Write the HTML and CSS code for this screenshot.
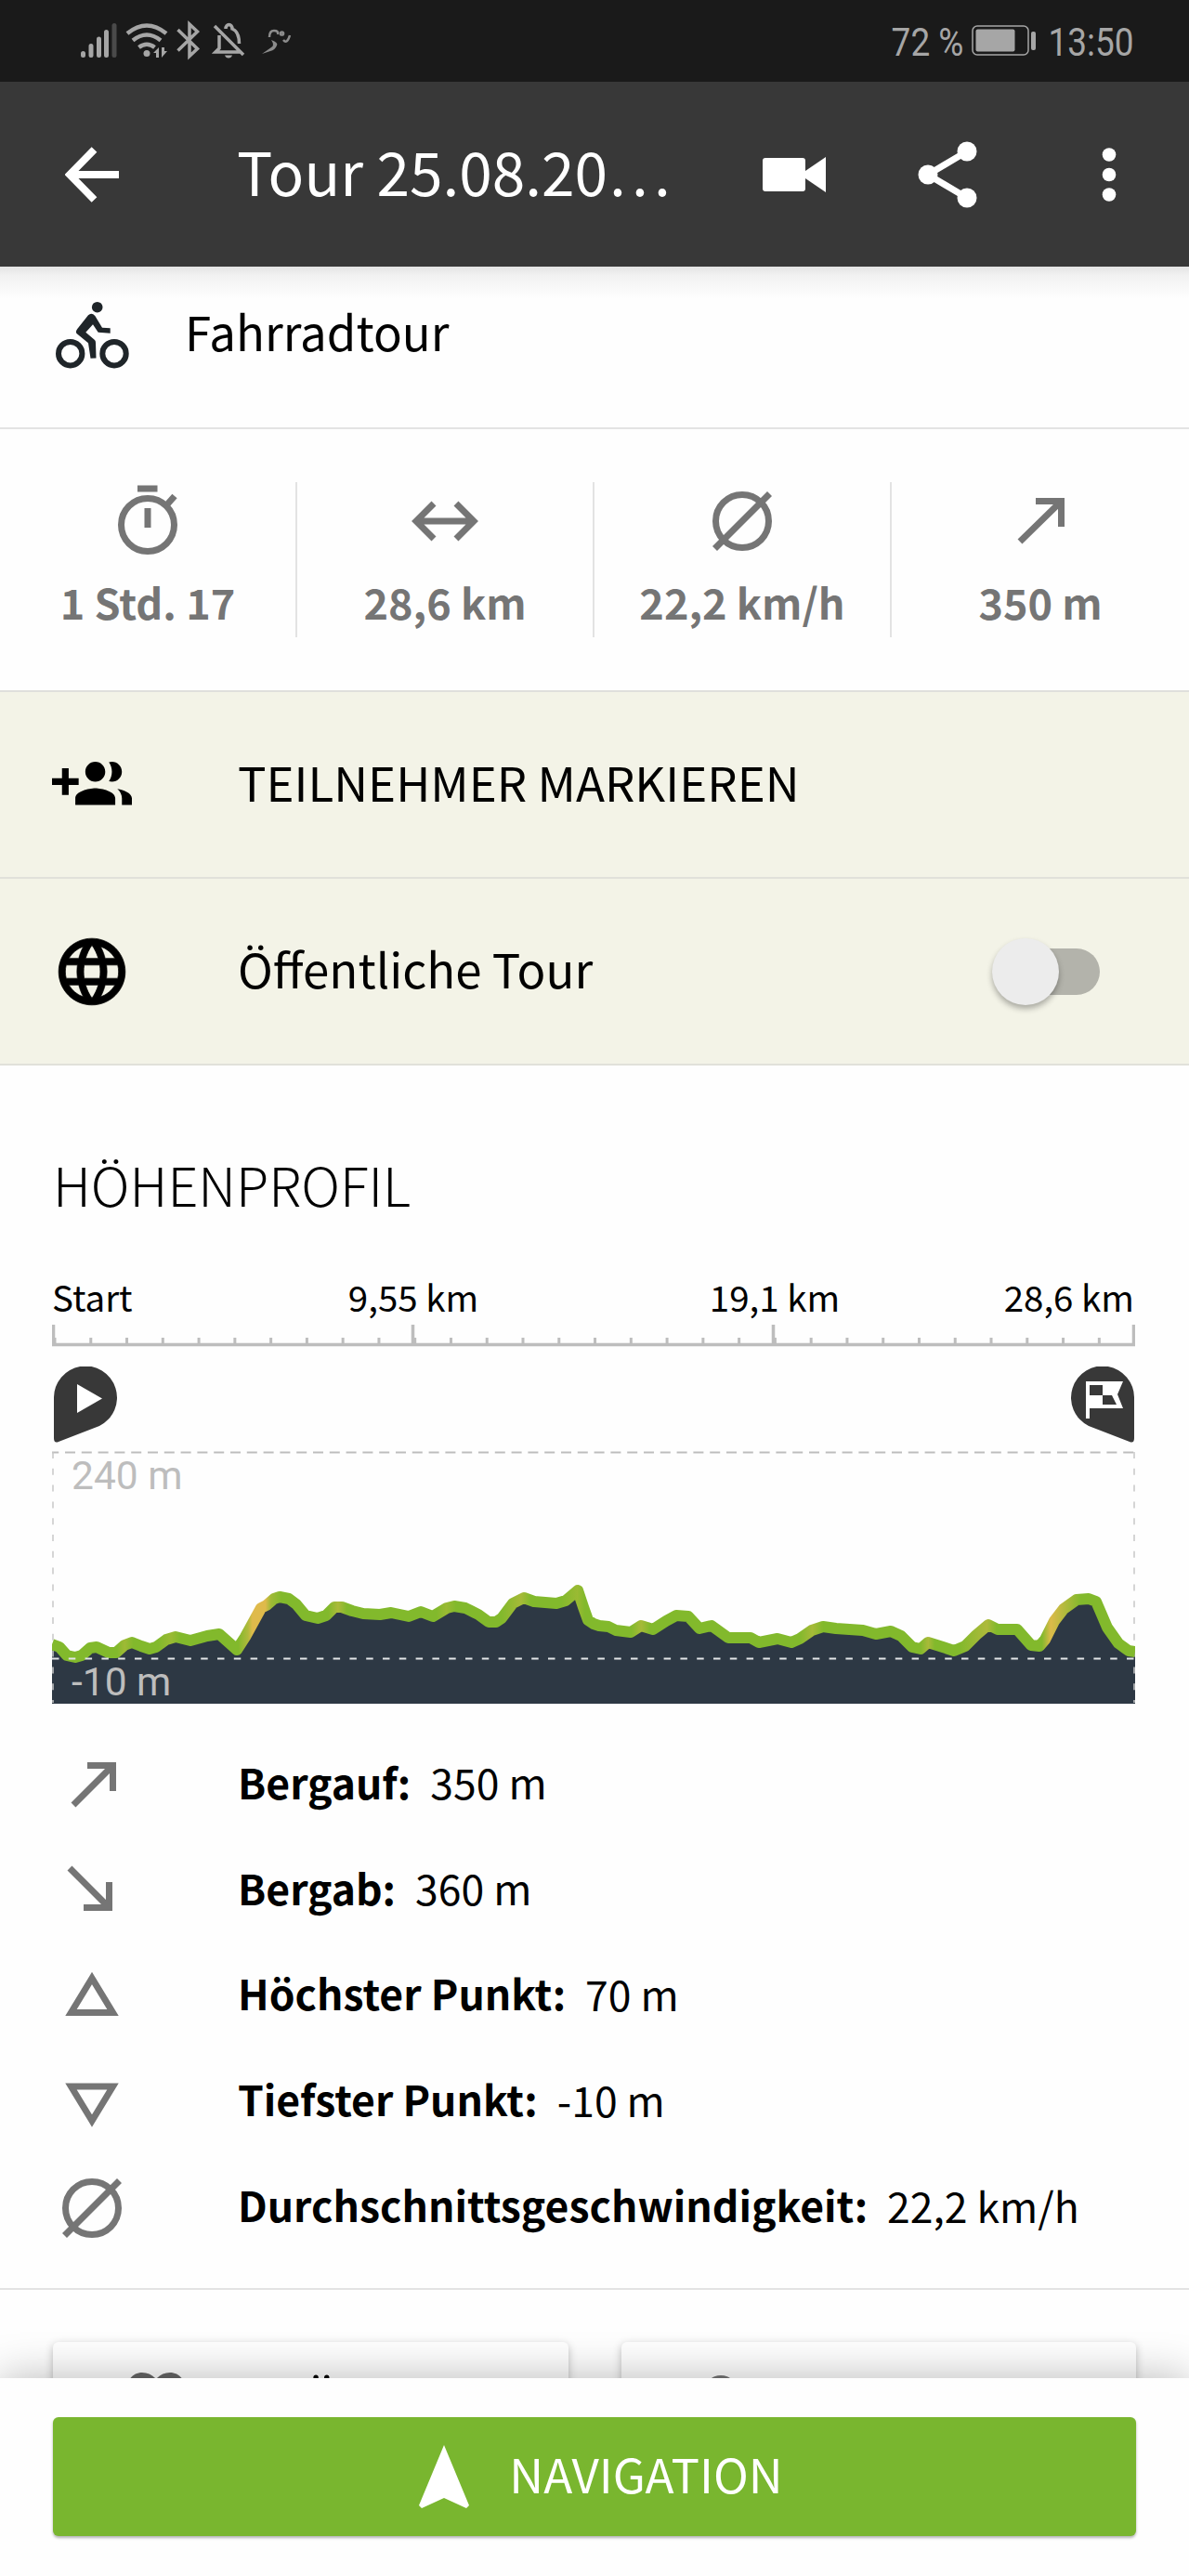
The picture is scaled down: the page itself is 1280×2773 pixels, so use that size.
FILE: index.html
```html
<!DOCTYPE html>
<html lang="de">
<head>
    <meta charset="UTF-8">
    <meta name="viewport" content="width=device-width, initial-scale=1.0">
    <title>Tour 25.08.2020</title>
    <link rel="stylesheet" href="styles.css">
</head>
<body>

<!-- Statusleiste -->
<div class="statusbar">
    <svg class="status-icons" width="240" height="50" viewBox="80 19 240 50">
        <g stroke="#a6a6a6" stroke-width="5" stroke-linecap="round">
            <path d="M89.500 57.500v2M98 49.500v10M106.500 42v17.500M114.500 34.500v25"/>
            <path d="M123 27.500v32" stroke="#4a4a4a"/>
        </g>
        <g fill="none" stroke="#a6a6a6" stroke-width="4.500">
            <path d="M137 36q21-17 42 0M143 43.500q15-12 30 0M149.500 51q8.500-6.500 17 0"/>
            <path d="M191.500 32l21 20.500-8.500 8V26l8.500 8-21 20.500" stroke-width="3.500"/>
            <path d="M231 28l31 31M259 56h-27l4-4V38M243 31c0-6 7-6 7 0 5 2 7.500 7 7.500 16" stroke-width="3.500"/>
        </g>
        <g fill="#a6a6a6">
            <circle cx="158" cy="57.500" r="3.500"/>
            <path d="M165 57l6-6v11h-3v-5zM174 51v11l6-7h-3v-4z"/>
            <path d="M242 59.500h8q-1 3-4 3t-4-3z"/>
        </g>
        <g fill="none" stroke="#8c8c8c" stroke-width="2.500">
            <path d="M290 40q0-7 5-7t4 4M305 43q4 5 7-5"/>
            <circle cx="303.500" cy="36" r="1.600"/>
            <path d="M282 58l10-7q4-2 0-8 8 3 6 6-2 5-7 6z" fill="#8c8c8c" stroke="none"/>
        </g>
    </svg>
    <div class="status-right">
        <span class="battery-text">72 %</span>
        <svg width="70" height="34" viewBox="0 0 70 34">
            <rect x="1" y="1" width="60" height="31" rx="5" fill="none" stroke="#a6a6a6" stroke-width="1.500"/>
            <rect x="4.500" y="4.500" width="42" height="24" rx="2" fill="#a6a6a6"/>
            <rect x="64" y="7" width="5" height="20" rx="2" fill="#a6a6a6"/>
        </svg>
        <span class="clock">13:50</span>
    </div>
</div>

<!-- Kopfzeile -->
<header class="appbar">
    <svg class="back" width="60" height="60" viewBox="0 0 60 60" fill="none" stroke="#fff" stroke-width="8">
        <path d="M58 30H8M31.500 3L5 30l26.500 27"/>
    </svg>
    <h1>Tour 25.08.20…</h1>
    <svg class="video" width="68" height="40" viewBox="0 0 68 40" fill="#fff">
        <rect y="2" width="46" height="36" rx="3"/>
        <path d="M46 16L68 1v38L46 24z"/>
    </svg>
    <svg class="share" width="64" height="72" viewBox="0 0 64 72" fill="#fff">
        <path d="M53 11L11 36l42 25" fill="none" stroke="#fff" stroke-width="7"/>
        <circle cx="53" cy="11" r="10.500"/>
        <circle cx="11" cy="36" r="10.500"/>
        <circle cx="53" cy="61" r="10.500"/>
    </svg>
    <svg class="more" width="16" height="60" viewBox="0 0 16 60" fill="#fff">
        <circle cx="8" cy="8.500" r="7.300"/>
        <circle cx="8" cy="30" r="7.300"/>
        <circle cx="8" cy="51.500" r="7.300"/>
    </svg>
</header>

<main>
    <section class="sport">
        <svg width="80" height="74" viewBox="0 0 80 74" fill="#1f2529">
            <g fill="none" stroke="#1f2529" stroke-width="6">
                <circle cx="15.700" cy="56.700" r="12.700"/>
                <circle cx="63" cy="56.700" r="12.700"/>
            </g>
            <circle cx="44.700" cy="6.700" r="5.800"/>
            <path d="M35 15.300q3.500-3.500 7.300.700L50 28.700l8.700.600v5.400l-13-1-5.700-8.400-7.700 8.400L42 42q1 1 1 3l.500 16.500-6 .300L35 45.300 22.500 35q-1.500-2 .8-5z"/>
        </svg>
        <span>Fahrradtour</span>
    </section>

    <!-- Kennzahlen -->
    <section class="stats">
        <div class="stat">
            <svg width="84" height="84" viewBox="0 0 84 84">
                <circle cx="42" cy="46" r="28.500"/>
                <path d="M31 7h21.500M42 28v21M63 24l8-9"/>
            </svg>
            <b>1 Std. 17</b>
        </div>
        <div class="stat">
            <svg width="84" height="84" viewBox="0 0 84 84">
                <path d="M11 42h61M30 23L11 42l19 19M54 23l19 19-19 19"/>
            </svg>
            <b>28,6 km</b>
        </div>
        <div class="stat">
            <svg width="84" height="84" viewBox="0 0 84 84">
                <circle cx="42" cy="42" r="28.500"/>
                <path d="M12.500 71.500l59-59"/>
            </svg>
            <b>22,2 km/h</b>
        </div>
        <div class="stat">
            <svg width="84" height="84" viewBox="0 0 84 84">
                <path d="M20 64l45-44M37 20.500h27.500v27.500"/>
            </svg>
            <b>350 m</b>
        </div>
    </section>

    <section class="option participants">
        <svg width="86" height="86" viewBox="0 0 24 24">
            <path d="M8 10H5V7H3v3H0v2h3v3h2v-3h3v-2zm10 1c1.660 0 2.990-1.340 2.990-3S19.660 5 18 5c-.320 0-.630.050-.910.140.570.810.900 1.790.900 2.860s-.340 2.040-.900 2.860c.280.090.590.140.910.140zm-5 0c1.660 0 2.990-1.340 2.990-3S14.660 5 13 5c-1.660 0-3 1.340-3 3s1.340 3 3 3zm6.620 2.160c.830.730 1.380 1.660 1.380 2.840v2h3v-2c0-1.540-2.370-2.490-4.380-2.840zM13 13c-2 0-6 1-6 3v2h12v-2c0-2-4-3-6-3z"/>
        </svg>
        <span>TEILNEHMER MARKIEREN</span>
    </section>
    <section class="option public">
        <svg width="86" height="86" viewBox="0 0 24 24">
            <path d="M11.990 2C6.470 2 2 6.480 2 12s4.470 10 9.990 10C17.520 22 22 17.520 22 12S17.520 2 11.990 2zm6.930 6h-2.950c-.320-1.250-.780-2.450-1.380-3.560 1.840.630 3.370 1.910 4.330 3.560zM12 4.040c.830 1.200 1.480 2.530 1.910 3.960h-3.820c.430-1.430 1.080-2.760 1.910-3.960zM4.260 14C4.100 13.360 4 12.690 4 12s.100-1.360.260-2h3.380c-.080.660-.140 1.320-.140 2 0 .680.060 1.340.140 2H4.260zm.820 2h2.950c.320 1.250.780 2.450 1.380 3.560-1.840-.630-3.370-1.900-4.330-3.560zm2.950-8H5.080c.960-1.660 2.490-2.930 4.330-3.560C8.810 5.550 8.350 6.750 8.030 8zM12 19.960c-.830-1.200-1.480-2.530-1.910-3.960h3.820c-.430 1.430-1.080 2.760-1.910 3.960zM14.340 14H9.660c-.090-.660-.160-1.320-.160-2 0-.680.070-1.350.160-2h4.680c.090.650.160 1.320.160 2 0 .680-.070 1.340-.160 2zm.250 5.560c.600-1.110 1.060-2.310 1.380-3.560h2.950c-.960 1.650-2.490 2.930-4.330 3.560zM16.360 14c.080-.660.140-1.320.140-2 0-.680-.060-1.340-.140-2h3.380c.160.640.260 1.310.260 2s-.100 1.360-.260 2h-3.380z" stroke="#000" stroke-width=".2"/>
        </svg>
        <span>Öffentliche Tour</span>
        <div class="switch"><div class="knob"></div></div>
    </section>

    <!-- Höhenprofil -->
    <section class="profile">
        <h2>HÖHENPROFIL</h2>
        <div class="scale">
            <span>Start</span>
            <span>9,55 km</span>
            <span>19,1 km</span>
            <span>28,6 km</span>
        </div>
        <svg class="ruler" width="1166" height="24" viewBox="0 0 1166 24" stroke="#bdbdbd" fill="none">
            <path d="M0 21.500h1166M1.500 0v21M388.500 0v21M776.500 0v21M1164.500 0v21" stroke-width="3.500"/>
            <path d="M1.500 17h1163" stroke-width="6" stroke-dasharray="3 35.770"/>
        </svg>
        <div class="pins">
            <svg width="68" height="82" viewBox="0 0 68 82">
                <path d="M0 34a34 34 0 1 1 49 30L5 81q-5 2-5-4z" fill="#383838"/>
                <path d="M25 19l27 15.500L25 50z" fill="#fff"/>
            </svg>
            <svg width="68" height="82" viewBox="0 0 68 82">
                <path d="M68 34a34 34 0 1 0-49 30l44 17q5 2 5-4z" fill="#383838"/>
                <path d="M16 16h40l-6 14 6 15H20v11h-4z" fill="#fff"/>
                <path d="M20 20h14v11H20zM34 31h10l5 10H34z" fill="#383838"/>
            </svg>
        </div>
        <svg class="chart" width="1166" height="276" viewBox="0 0 1166 276">
            <defs>
                <linearGradient id="slope" gradientUnits="userSpaceOnUse" x1="0" y1="0" x2="1166" y2="0">
                    <stop offset="0" stop-color="#82b92c"/>
                    <stop offset=".060" stop-color="#82b92c"/>
                    <stop offset=".067" stop-color="#9fba35"/>
                    <stop offset=".075" stop-color="#82b92c"/>
                    <stop offset=".098" stop-color="#82b92c"/>
                    <stop offset=".110" stop-color="#9aba33"/>
                    <stop offset=".118" stop-color="#82b92c"/>
                    <stop offset=".172" stop-color="#82b92c"/>
                    <stop offset=".181" stop-color="#b0ba3c"/>
                    <stop offset=".185" stop-color="#dfba4b"/>
                    <stop offset=".197" stop-color="#dfba4b"/>
                    <stop offset=".202" stop-color="#a0ba36"/>
                    <stop offset=".212" stop-color="#82b92c"/>
                    <stop offset=".255" stop-color="#82b92c"/>
                    <stop offset=".264" stop-color="#acba3a"/>
                    <stop offset=".272" stop-color="#82b92c"/>
                    <stop offset=".355" stop-color="#82b92c"/>
                    <stop offset=".364" stop-color="#9aba33"/>
                    <stop offset=".373" stop-color="#82b92c"/>
                    <stop offset=".415" stop-color="#82b92c"/>
                    <stop offset=".433" stop-color="#a6ba38"/>
                    <stop offset=".442" stop-color="#82b92c"/>
                    <stop offset=".470" stop-color="#82b92c"/>
                    <stop offset=".485" stop-color="#9aba33"/>
                    <stop offset=".492" stop-color="#82b92c"/>
                    <stop offset=".535" stop-color="#82b92c"/>
                    <stop offset=".544" stop-color="#a6ba38"/>
                    <stop offset=".552" stop-color="#82b92c"/>
                    <stop offset=".690" stop-color="#82b92c"/>
                    <stop offset=".702" stop-color="#a6ba38"/>
                    <stop offset=".712" stop-color="#82b92c"/>
                    <stop offset=".802" stop-color="#82b92c"/>
                    <stop offset=".809" stop-color="#a9ba39"/>
                    <stop offset=".815" stop-color="#82b92c"/>
                    <stop offset=".838" stop-color="#82b92c"/>
                    <stop offset=".863" stop-color="#aeba3b"/>
                    <stop offset=".872" stop-color="#82b92c"/>
                    <stop offset=".914" stop-color="#82b92c"/>
                    <stop offset=".922" stop-color="#dcba4a"/>
                    <stop offset=".934" stop-color="#b5ba3e"/>
                    <stop offset=".950" stop-color="#82b92c"/>
                    <stop offset="1" stop-color="#82b92c"/>
                </linearGradient>
            </defs>
            <path d="M0 5.500h1166" stroke="#bdbdbd" stroke-width="2" stroke-dasharray="11 6.800" stroke-dashoffset="-14"/>
            <path id="area" fill="#2d3844"/>
            <path d="M1 5v270M1165 5v270" stroke="#c8c8c8" stroke-width="1.500" stroke-dasharray="7 10.800"/>
            <path id="line" fill="none" stroke="url(#slope)" stroke-width="12" stroke-linejoin="round"/>
            <path d="M0 227.500h1166" stroke="#e3e6e8" stroke-width="2" stroke-dasharray="7.500 10.300"/>
            <text x="21" y="45">240 m</text>
            <text x="21" y="267">-10 m</text>
        </svg>
    </section>

    <!-- Details -->
    <section class="details">
        <div class="row">
            <svg width="84" height="84" viewBox="0 0 84 84"><path d="M22 63l41-41M37 20.500h27.500V48"/></svg>
            <b>Bergauf:</b><span>350 m</span>
        </div>
        <div class="row">
            <svg width="84" height="84" viewBox="0 0 84 84"><path d="M18 17l41 41M33 59.500h27.500V32"/></svg>
            <b>Bergab:</b><span>360 m</span>
        </div>
        <div class="row">
            <svg width="84" height="84" viewBox="0 0 84 84"><path d="M42 22.500L19.500 59.500h45z"/></svg>
            <b>Höchster Punkt:</b><span>70 m</span>
        </div>
        <div class="row">
            <svg width="84" height="84" viewBox="0 0 84 84"><path d="M42 62L19.500 25h45z"/></svg>
            <b>Tiefster Punkt:</b><span>-10 m</span>
        </div>
        <div class="row">
            <svg width="84" height="84" viewBox="0 0 84 84"><circle cx="42" cy="42" r="28.500"/><path d="M12.500 71.500l59-59"/></svg>
            <b>Durchschnittsgeschwindigkeit:</b><span>22,2 km/h</span>
        </div>
    </section>

    <section class="cards">
        <div class="card">
            <svg width="62" height="56" viewBox="0 0 62 56" fill="#666"><path d="M31 56C12 40 0 30 0 16 0 7 7 0 16 0q9 0 15 7 6-7 15-7c9 0 16 7 16 16 0 14-12 24-31 40z"/></svg>
            <span>Ö</span>
        </div>
        <div class="card">
            <svg class="dot" width="36" height="36" viewBox="0 0 36 36" fill="#757575"><circle cx="18" cy="18" r="18"/></svg>
        </div>
    </section>
</main>

<footer class="bottom">
    <button>
        <svg width="54" height="68" viewBox="0 0 54 68" fill="#fff"><path d="M27 0L54 65l-3 3-24-11L3 68l-3-3z"/></svg>
        <span>NAVIGATION</span>
    </button>
</footer>

<script>
    // Höhenpunkte entlang der Strecke (x, y)
    const points = [
        [0, 212], [8, 215], [16, 224], [25, 226], [32, 224], [41, 216], [48, 215], [61, 221], [69, 221],
        [78, 213], [86, 210], [96, 214], [105, 217], [112, 215], [123, 207], [133, 204], [149, 208],
        [167, 203], [180, 201], [199, 218], [208, 204], [225, 173], [231, 170], [239, 163], [245, 161],
        [255, 163], [263, 169], [273, 181], [286, 184], [295, 181], [304, 172], [312, 172], [323, 176],
        [335, 179], [353, 180], [365, 178], [384, 182], [397, 177], [410, 182], [425, 173], [433, 171],
        [445, 173], [459, 180], [470, 188], [478, 188], [484, 184], [496, 168], [508, 162], [519, 166],
        [543, 168], [553, 165], [566, 154], [572, 172], [577, 186], [583, 190], [589, 192], [599, 193],
        [607, 197], [623, 199], [634, 192], [647, 196], [661, 187], [672, 181], [685, 182], [697, 195],
        [710, 192], [728, 205], [752, 205], [761, 210], [781, 206], [796, 210], [805, 206], [818, 197],
        [830, 193], [844, 195], [873, 197], [887, 201], [903, 198], [914, 203], [926, 215], [935, 217],
        [943, 210], [959, 215], [971, 219], [983, 214], [995, 202], [1008, 191], [1018, 196], [1039, 196],
        [1054, 213], [1063, 214], [1069, 207], [1079, 187], [1089, 174], [1103, 164], [1116, 163],
        [1124, 166], [1136, 194], [1148, 211], [1159, 219], [1166, 220]
    ];
    const line = 'M' + points.map(p => p.join(' ')).join('L');
    document.getElementById('line').setAttribute('d', line);
    document.getElementById('area').setAttribute('d', line + 'V276H0z');
</script>

</body>
</html>
```
FILE: styles.css
```css
* {
    box-sizing: border-box;
}
body {
    margin: 0;
    height: 2773px;
    overflow: hidden;
    display: flex;
    flex-direction: column;
    font-family: "Noto Sans CJK SC", "Noto Sans", sans-serif;
    font-size: 46px;
    color: #000;
    background-color: #fefefe;
}
svg {
    display: block;
    flex: none;
}
h1, h2 {
    margin: 0;
}
.statusbar {
    height: 88px;
    flex: none;
    padding: 0 59px 0 80px;
    display: flex;
    align-items: center;
    justify-content: space-between;
    background-color: #1a1a1a;
    color: #a6a6a6;
    font-family: Roboto, sans-serif;
    font-size: 42px;
}
.status-right {
    display: flex;
    align-items: center;
}
.battery-text, .clock {
    transform: scaleX(0.88);
    transform-origin: right;
    margin-top: 3px;
}
.battery-text {
    margin-right: 9px;
}
.clock {
    margin-left: 0;
}
.appbar {
    height: 199px;
    flex: none;
    padding: 0 77px 0 70px;
    display: flex;
    align-items: center;
    background-color: #383838;
    color: #fff;
}
.appbar h1 {
    width: 566px;
    margin-left: 125px;
    font-size: 64px;
    font-weight: 400;
    line-height: 90px;
    margin-top: -9px;
}
.share {
    margin-left: 99px;
}
.more {
    margin-left: 134px;
}
main {
    height: 2273px;
    flex: none;
    overflow: hidden;
    background: linear-gradient(#e4e4e4, #f2f2f2 10px, #fefefe 34px);
}
.sport {
    height: 175px;
    padding: 0 60px 26px;
    display: flex;
    align-items: center;
    gap: 59px;
    font-size: 51px;
    border-bottom: 2px solid #e3e3e3;
}
.sport span {
    margin-top: -10px;
}
.stats {
    height: 283px;
    padding: 57px 0;
    display: grid;
    grid-template-columns: repeat(4, 1fr);
    border-bottom: 2px solid #dfdfdc;
}
.stat {
    display: flex;
    flex-direction: column;
    align-items: center;
    border-right: 2px solid #e3e3e3;
    font-size: 45px;
    line-height: 66px;
    color: #757575;
}
.stat:last-child {
    border-right: none;
}
.stat svg, .row svg {
    fill: none;
    stroke: #757575;
    stroke-width: 7;
}
.stat b {
    margin-top: 12px;
}
.option {
    height: 201px;
    padding: 0 96px 0 56px;
    display: flex;
    align-items: center;
    gap: 114px;
    background-color: #f3f3e7;
    border-bottom: 2px solid #e1e1da;
    font-size: 51px;
}
.option span {
    margin-top: -8px;
}
.switch {
    width: 110px;
    height: 50px;
    margin-left: auto;
    border-radius: 25px;
    background-color: #b3b3ab;
    display: flex;
    align-items: center;
}
.knob {
    width: 72px;
    height: 72px;
    margin-left: -6px;
    flex: none;
    border-radius: 50%;
    background-color: #ececec;
    box-shadow: 0 4px 6px rgba(0, 0, 0, 0.3);
}
.profile {
    height: 690px;
    padding: 85px 57px 0 56px;
}
.profile h2 {
    padding-left: 1px;
    font-size: 57.5px;
    font-weight: 300;
    line-height: 84px;
}
.scale {
    margin-top: 51px;
    display: grid;
    grid-template-columns: 1fr 2fr 2fr 1fr;
    text-align: center;
    font-size: 38.5px;
    line-height: 56px;
    white-space: nowrap;
}
.scale span:first-child {
    text-align: left;
}
.scale span:last-child {
    display: flex;
    justify-content: flex-end;
    padding-right: 2px;
}
.ruler {
    margin-top: 3px;
}
.pins {
    margin: 21px 2px 0 2px;
    display: flex;
    justify-content: space-between;
}
.chart {
    margin-top: 5px;
}
.chart text {
    font-family: Roboto, sans-serif;
    font-size: 42.5px;
    fill: #bdbdbd;
}
.details {
    height: 628px;
    padding: 28px 57px 0;
    border-bottom: 2px solid #e3e3e3;
}
.row {
    height: 113.8px;
    display: flex;
    align-items: center;
    font-size: 44.5px;
}
.row b {
    margin: -9px 0 0 115px;
}
.row span {
    margin: -8px 0 0 21px;
    font-size: 44.5px;
}
.cards {
    padding: 56px 57px 0;
    display: grid;
    grid-template-columns: 1fr 1fr;
    gap: 57px;
}
.card {
    height: 130px;
    padding: 33px 80px;
    display: flex;
    align-items: flex-start;
    border-radius: 6px;
    box-shadow: 0 3px 10px rgba(0, 0, 0, 0.25);
}
.card span {
    margin: -10px 0 0 128px;
    font-size: 51px;
    line-height: 74px;
}
.card .dot {
    margin: 3px 0 0 9px;
}
.bottom {
    height: 213px;
    flex: none;
    padding: 42px 57px;
    background-color: #fefefe;
    box-shadow: 0 0 44px rgba(0, 0, 0, 0.28);
}
.bottom button {
    width: 100%;
    height: 128px;
    padding: 0 0 0 14px;
    border: none;
    border-radius: 6px;
    display: flex;
    align-items: center;
    justify-content: center;
    gap: 43px;
    font-family: inherit;
    font-size: 51px;
    font-weight: 400;
    color: #fff;
    background-color: #79b62f;
    box-shadow: 0 2px 3px rgba(0, 0, 0, 0.3);
}
.bottom span {
    margin-top: -8px;
}
```
